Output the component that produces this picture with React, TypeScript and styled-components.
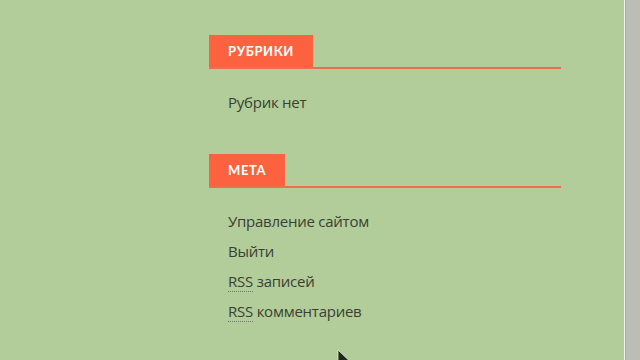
import styled, { createGlobalStyle } from 'styled-components'

const GlobalStyle = createGlobalStyle`
  html, body {
    margin: 0;
    padding: 0;
    width: 640px;
    height: 360px;
    overflow: hidden;
    background: #b2cd99;
  }
`

const widgets = [
  { title: 'Рубрики', items: [{ text: 'Рубрик нет' }] },
  {
    title: 'Мета',
    items: [
      { text: 'Управление сайтом' },
      { text: 'Выйти' },
      { abbr: 'RSS', text: 'записей' },
      { abbr: 'RSS', text: 'комментариев' },
    ],
  },
]

const App = () => {
  return (
    <Page>
      <GlobalStyle />
      <Main>
        <Sidebar>
          {widgets.map((w) => (
            <Widget key={w.title}>
              <TitleRow>
                <Title>{w.title}</Title>
              </TitleRow>
              <List>
                {w.items.map((item) => (
                  <Item key={item.text}>
                    {item.abbr && <Abbr>{item.abbr}</Abbr>}
                    {item.abbr ? ' ' : ''}
                    {item.text}
                  </Item>
                ))}
              </List>
            </Widget>
          ))}
        </Sidebar>
        <Cursor width="14" height="20" viewBox="0 0 14 20">
          <path d="M1 1 L1 16 L4.5 12.5 L7 18.5 L9.5 17.5 L7 11.5 L12 11.5 Z" fill="#1e2a1c" stroke="#dfe8d6" strokeWidth="0.8" />
        </Cursor>
      </Main>
      <Scrollbar />
    </Page>
  )
}

const Page = styled.div`
  display: flex;
  width: 640px;
  height: 360px;
  font-family: 'Open Sans', 'Liberation Sans', sans-serif;
`
const Main = styled.div`
  position: relative;
  flex: 1;
  border-right: 1px solid #f2f5ea;
  padding: 35px 0 0 209px;
`
const Sidebar = styled.div`
  width: 352px;
  display: flex;
  flex-direction: column;
  gap: 42px;
`
const Widget = styled.section`
  display: flex;
  flex-direction: column;
`
const TitleRow = styled.div`
  display: flex;
  border-bottom: 2px solid #ea6f4b;
`
const Title = styled.h3`
  margin: 0;
  height: 32px;
  display: flex;
  align-items: center;
  padding: 0 19px;
  background: #fd6240;
  color: #fff;
  font-family: 'Lato', 'Liberation Sans', sans-serif;
  font-weight: 700;
  font-size: 13px;
  letter-spacing: 0.6px;
  text-transform: uppercase;
`
const List = styled.ul`
  list-style: none;
  margin: 0;
  padding: 23px 0 0 19px;
  display: flex;
  flex-direction: column;
  gap: 10px;
`
const Item = styled.li`
  font-size: 15px;
  line-height: 20px;
  color: #394134;
  letter-spacing: -0.25px;
`
const Abbr = styled.abbr`
  text-decoration: none;
  border-bottom: 1px dotted #6d7a63;
`
const Cursor = styled.svg`
  position: absolute;
  left: 337px;
  top: 349px;
`
const Scrollbar = styled.div`
  width: 14px;
  background: #bdbdb8;
  border-left: 1px solid #a9aaa4;
`

export default App
